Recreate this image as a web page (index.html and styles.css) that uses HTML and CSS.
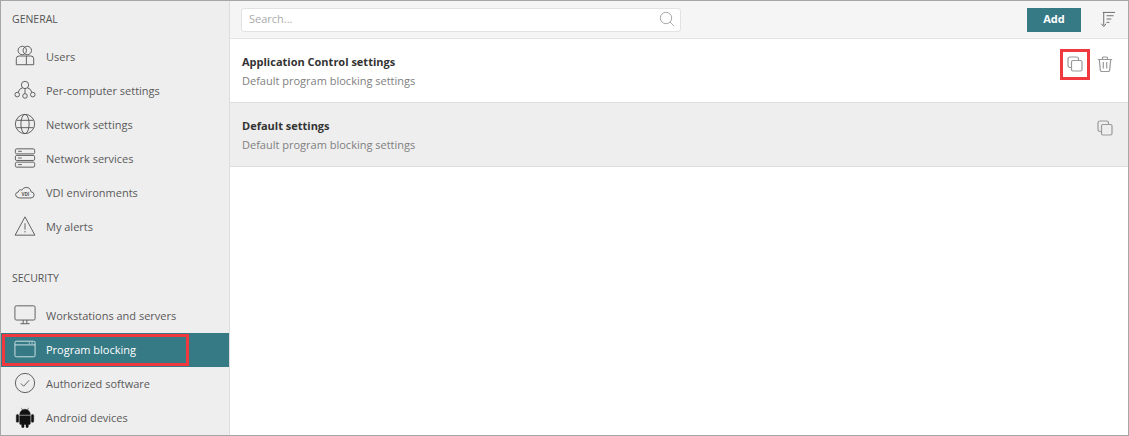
FILE: index.html
```html
<!DOCTYPE html>
<html lang="en">
<head>
  <meta charset="UTF-8">
  <title>Program blocking</title>
  <link rel="stylesheet" href="styles.css">
</head>
<body>
  <div class="window">
    <nav class="sidebar">
      <div class="nav-title">GENERAL</div>
      <a class="nav-item">
        <svg class="nav-icon" viewBox="0 0 24 24"><circle cx="9" cy="6" r="4.6"/><circle cx="14.5" cy="6" r="4.6"/><path d="M2.500 21.500v-6.500q0-3 3-3h13q3 0 3 3v6.500zM13.500 12v9.500"/></svg>
        Users
      </a>
      <a class="nav-item">
        <svg class="nav-icon" viewBox="0 0 24 24"><circle cx="12" cy="6.500" r="4"/><circle cx="3.500" cy="17" r="2.500"/><circle cx="12" cy="18.500" r="2.500"/><circle cx="20.500" cy="17" r="2.500"/><path d="M9.500 9.500q-4 1-5 5M12 10.500v5.500M14.500 9.500q4 1 5 5"/></svg>
        Per-computer settings
      </a>
      <a class="nav-item">
        <svg class="nav-icon" viewBox="0 0 24 24"><circle cx="12" cy="12" r="10.500"/><ellipse cx="12" cy="12" rx="4.500" ry="10.500"/><path d="M2.800 8h18.400M2.800 16h18.400"/></svg>
        Network settings
      </a>
      <a class="nav-item">
        <svg class="nav-icon" viewBox="0 0 24 24"><rect x="1.500" y="2" width="21" height="5.500" rx="1.500"/><rect x="1.500" y="9.200" width="21" height="5.500" rx="1.500"/><rect x="1.500" y="16.500" width="21" height="5.500" rx="1.500"/><path d="M4.500 4.700h4M4.500 12h4M4.500 19.200h4"/></svg>
        Network services
      </a>
      <a class="nav-item">
        <svg class="nav-icon" viewBox="0 0 24 24"><path d="M6 18.500h12.500q3.500-.3 3.500-3.300 0-3-3.500-3.500-.7-4.700-5.200-4.700-3.300 0-4.800 3-1-.7-2.300-.2-1.500.6-1.500 2.200-3 .6-3 3 0 2.900 4.300 3.500z"/><text class="vdi-text" x="12.500" y="16">VDI</text></svg>
        VDI environments
      </a>
      <a class="nav-item">
        <svg class="nav-icon" viewBox="0 0 24 24"><path d="M12 2 1.200 22h21.600zM12 9v7M12 17.500v1.500"/></svg>
        My alerts
      </a>
      <div class="nav-title nav-title-second">SECURITY</div>
      <a class="nav-item">
        <svg class="nav-icon" viewBox="0 0 24 24"><rect x="1" y="2" width="22" height="15.500" rx="1.500"/><path d="M10 17.500v4M14 17.500v4M7 21.500h10"/></svg>
        Workstations and servers
      </a>
      <a class="nav-item active">
        <svg class="nav-icon" viewBox="0 0 24 24"><rect x="1" y="3.500" width="22" height="17" rx="1.500"/><path d="M1 7.500h22M16 5.500h1.500M19 5.500h1.500"/></svg>
        Program blocking
      </a>
      <a class="nav-item">
        <svg class="nav-icon" viewBox="0 0 24 24"><circle cx="12" cy="12" r="10.500"/><path d="m7.500 12.500 3 3 6-6.500"/></svg>
        Authorized software
      </a>
      <a class="nav-item">
        <svg class="nav-icon android" viewBox="0 0 24 24"><path d="M6.200 9.500a5.800 6 0 0 1 11.600 0zM6.200 10.500h11.600v8.500q0 1.200-1.200 1.200h-1v2.300a1.200 1.200 0 0 1-2.500 0v-2.300h-2.200v2.300a1.200 1.200 0 0 1-2.500 0v-2.300h-1q-1.200 0-1.200-1.200zM2.500 10.500a1.300 1.300 0 0 1 2.600 0v6a1.300 1.300 0 0 1-2.600 0zM18.900 10.500a1.300 1.300 0 0 1 2.600 0v6a1.300 1.300 0 0 1-2.600 0zM8 2l1.500 2.500M16 2l-1.500 2.500"/></svg>
        Android devices
      </a>
      <div class="highlight highlight-nav"></div>
    </nav>

    <main class="content">
      <div class="toolbar">
        <div class="search">
          <span class="search-text">Search...</span>
          <svg class="search-icon" viewBox="0 0 16 16"><circle cx="7" cy="7" r="5.700"/><path d="m11 11 4 4"/></svg>
        </div>
        <button class="add-btn">Add</button>
        <svg class="sort-icon" viewBox="0 0 18 18"><path d="M5 2v13M2.500 13.500 5 16.500l2.500-3M4 1.500h13M8 5h7.500M8 8.500h5M8 12h3"/></svg>
      </div>

      <div class="row">
        <div class="row-text">
          <div class="row-title">Application Control settings</div>
          <div class="row-desc">Default program blocking settings</div>
        </div>
        <div class="row-actions">
          <svg class="action-icon" viewBox="0 0 16 16"><rect x="1" y="1" width="10.500" height="10.500" rx="2"/><rect x="4.500" y="4.500" width="10.500" height="10.500" rx="1.500" class="copy-front"/></svg>
          <svg class="action-icon" viewBox="0 0 16 16"><path d="M.8 3.500h14.400M5.500 3.500V2q0-1 1-1h3q1 0 1 1v1.500M2.300 3.500l1 10.500q.1 1.500 1.500 1.500h6.400q1.400 0 1.500-1.500l1-10.500M6.300 6v6.500M9.700 6v6.500"/></svg>
        </div>
        <div class="highlight highlight-copy"></div>
      </div>

      <div class="row row-default">
        <div class="row-text">
          <div class="row-title">Default settings</div>
          <div class="row-desc">Default program blocking settings</div>
        </div>
        <div class="row-actions">
          <svg class="action-icon" viewBox="0 0 16 16"><rect x="1" y="1" width="10.500" height="10.500" rx="2"/><rect x="4.500" y="4.500" width="10.500" height="10.500" rx="1.500" class="copy-front"/></svg>
        </div>
      </div>
    </main>
  </div>
</body>
</html>
```

FILE: styles.css
```css
body {
  margin: 0;
  font-family: "Open Sans", sans-serif;
  font-size: 11px;
  color: #555;
  background-color: #fff;
}
svg {
  fill: none;
  stroke-width: 1;
}
.window {
  display: flex;
  box-sizing: border-box;
  width: 1129px;
  height: 436px;
  border: 1px solid #a6a6a6;
  overflow: hidden;
}
.sidebar {
  position: relative;
  flex: none;
  width: 228px;
  background-color: #eee;
  border-right: 1px solid #ddd;
}
.nav-title {
  height: 39px;
  padding-left: 11px;
  line-height: 36px;
  font-size: 10.500px;
}
.nav-title-second {
  margin-top: 16px;
}
.nav-item {
  display: flex;
  align-items: center;
  gap: 10px;
  box-sizing: border-box;
  height: 34px;
  padding: 0 0 2px 13px;
  color: #5a5a5a;
}
.nav-item.active {
  background-color: #367a86;
  color: #fff;
}
.nav-icon {
  flex: none;
  width: 22px;
  height: 22px;
  stroke: #555;
}
.active .nav-icon {
  stroke: #d8e8ea;
}
.nav-icon.android {
  fill: #111;
  stroke: #111;
  stroke-width: .5;
}
.vdi-text {
  font-size: 5px;
  font-weight: 700;
  fill: #555;
  stroke: none;
  text-anchor: middle;
}
.highlight {
  position: absolute;
  box-sizing: border-box;
  border: 3px solid #f0393f;
}
.highlight-nav {
  left: 1px;
  top: 333px;
  width: 187px;
  height: 32px;
}
.highlight-copy {
  right: 38px;
  top: 10px;
  width: 30px;
  height: 31px;
}
.content {
  flex: 1;
  min-width: 0;
}
.toolbar {
  display: flex;
  align-items: center;
  height: 37px;
  padding: 0 12px 0 11px;
  background-color: #f5f5f5;
  border-bottom: 1px solid #e3e3e3;
}
.search {
  display: flex;
  align-items: center;
  justify-content: space-between;
  box-sizing: border-box;
  width: 440px;
  height: 24px;
  padding: 0 5px 2px 7px;
  background-color: #fff;
  border: 1px solid #e2e2e2;
  border-radius: 3px;
}
.search-text {
  color: #aaa;
  font-size: 11px;
}
.search-icon {
  width: 16px;
  height: 16px;
  stroke: #aaa;
}
.add-btn {
  width: 54px;
  height: 24px;
  margin-left: auto;
  padding: 0 0 2px;
  background-color: #367a86;
  color: #fff;
  border: none;
  font-family: "Open Sans", sans-serif;
  font-size: 11px;
  font-weight: 700;
}
.sort-icon {
  width: 17px;
  height: 17px;
  margin-left: 18px;
  stroke: #666;
}
.row {
  position: relative;
  display: flex;
  justify-content: space-between;
  box-sizing: border-box;
  height: 64px;
  padding: 14px 15px 0 12px;
  border-bottom: 1px solid #dedede;
}
.row-default {
  background-color: #eee;
}
.row-title {
  color: #333;
  font-weight: 700;
  line-height: 18px;
}
.row-desc {
  margin-top: 1px;
  color: #808080;
  line-height: 18px;
}
.row-actions {
  display: flex;
  gap: 14px;
  margin-top: 3px;
}
.action-icon {
  width: 16px;
  height: 16px;
  stroke: #999;
  stroke-width: 1.2;
}
.copy-front {
  fill: #fff;
}
.row-default .copy-front {
  fill: #eee;
}
```
